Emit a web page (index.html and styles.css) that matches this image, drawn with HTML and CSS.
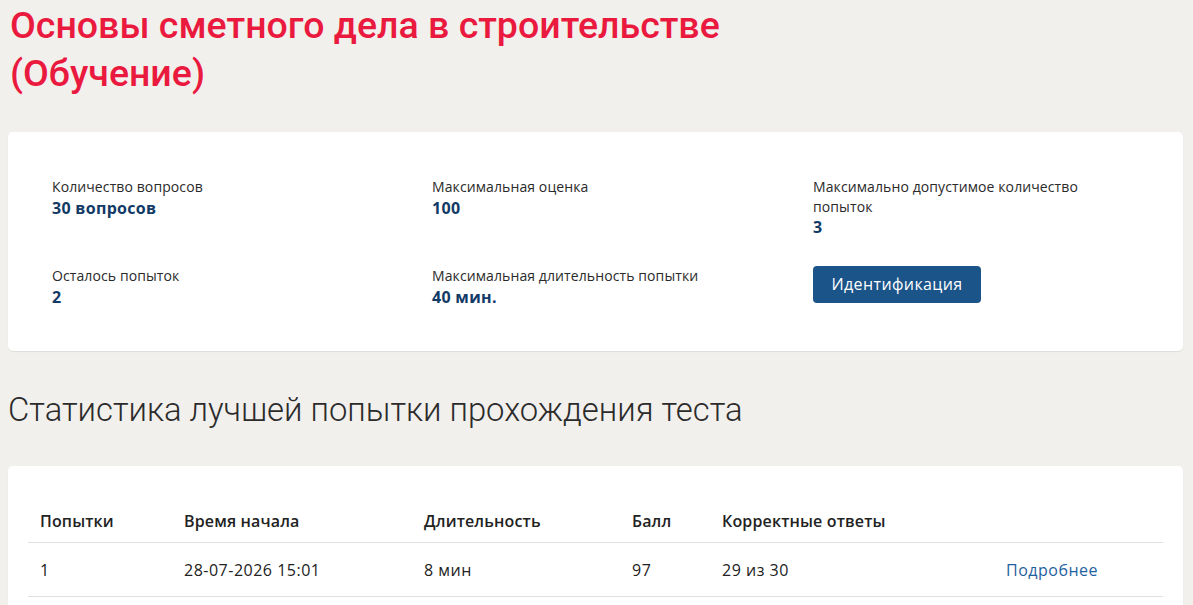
FILE: index.html
```html
<!DOCTYPE html>
<html lang="ru">
<head>
<meta charset="utf-8">
<title>Основы сметного дела в строительстве (Обучение)</title>
<link rel="stylesheet" href="styles.css">
</head>
<body>
<h1 class="title">Основы сметного дела в строительстве<br>(Обучение)</h1>

<section class="card info">
  <div class="info-grid">
    <div class="item">
      <div class="label">Количество вопросов</div>
      <div class="value">30 вопросов</div>
    </div>
    <div class="item">
      <div class="label">Максимальная оценка</div>
      <div class="value">100</div>
    </div>
    <div class="item">
      <div class="label">Максимально допустимое количество попыток</div>
      <div class="value">3</div>
    </div>
    <div class="item">
      <div class="label">Осталось попыток</div>
      <div class="value">2</div>
    </div>
    <div class="item">
      <div class="label">Максимальная длительность попытки</div>
      <div class="value">40 мин.</div>
    </div>
    <div class="item">
      <button class="btn" type="button">Идентификация</button>
    </div>
  </div>
</section>

<h2 class="subtitle">Статистика лучшей попытки прохождения теста</h2>

<section class="card stats">
  <table class="table">
    <thead>
      <tr>
        <th class="c1">Попытки</th>
        <th class="c2">Время начала</th>
        <th class="c3">Длительность</th>
        <th class="c4">Балл</th>
        <th class="c5">Корректные ответы</th>
        <th class="c6"></th>
      </tr>
    </thead>
    <tbody>
      <tr>
        <td>1</td>
        <td>28-07-2026 15:01</td>
        <td>8 мин</td>
        <td>97</td>
        <td>29 из 30</td>
        <td><a class="link" href="#">Подробнее</a></td>
      </tr>
    </tbody>
  </table>
</section>
</body>
</html>
```

FILE: styles.css
```css
html, body {
  margin: 0;
  padding: 0;
}
body {
  background: #f2f0ed;
  font-family: "Open Sans", "Noto Sans", sans-serif;
  color: #222;
  padding: 0 10px 0 8px;
}
.title {
  margin: 0;
  padding: 1px 0 0 2px;
  font-family: Roboto, "Liberation Sans", sans-serif;
  font-weight: 500;
  font-size: 37.5px;
  line-height: 48px;
  color: #ea1a3f;
}
.card {
  background: #fff;
  border-radius: 5px;
  box-shadow: 0 1px 1px rgba(0,0,0,0.08);
}
.info {
  margin-top: 35px;
  padding: 45px 20px 43px 44px;
}
.info-grid {
  display: grid;
  grid-template-columns: 380px 381px 1fr;
  row-gap: 28px;
}
.item {
  padding-right: 60px;
}
.label {
  font-size: 14px;
  line-height: 19.5px;
  color: #2a2a2a;
  letter-spacing: 0.1px;
}
.value {
  font-size: 16px;
  line-height: 22px;
  font-weight: 700;
  color: #123a66;
  letter-spacing: 0.3px;
}
.btn {
  font-family: "Open Sans", "Noto Sans", sans-serif;
  font-size: 16px;
  line-height: 21px;
  color: #fff;
  background: #1b5489;
  border: 0;
  border-radius: 4px;
  padding: 8px 10px;
  width: 168px;
  height: 37px;
  letter-spacing: 0.4px;
}
.subtitle {
  margin: 39px 0 36px 0;
  font-family: Roboto, "Liberation Sans", sans-serif;
  font-weight: 300;
  font-size: 32.8px;
  line-height: 40px;
  color: #2b2b2b;
}
.stats {
  padding: 33px 20px 40px 20px;
}
.table {
  width: 100%;
  border-collapse: collapse;
  font-size: 16px;
}
.table th {
  text-align: left;
  font-weight: 600;
  color: #222;
  padding: 10px 12px 9px 12px;
  line-height: 24px;
  letter-spacing: 0.15px;
  border-bottom: 1px solid #e0e0e0;
}
.table td {
  padding: 15px 12px 14px 12px;
  line-height: 24px;
  color: #222;
  letter-spacing: 0.5px;
  border-bottom: 1px solid #e0e0e0;
}
.c1 { width: 120px; }
.c2 { width: 216px; }
.c3 { width: 184px; }
.c4 { width: 66px; }
.c5 { width: 260px; }
.link {
  color: #1f62a0;
  text-decoration: none;
}
```
